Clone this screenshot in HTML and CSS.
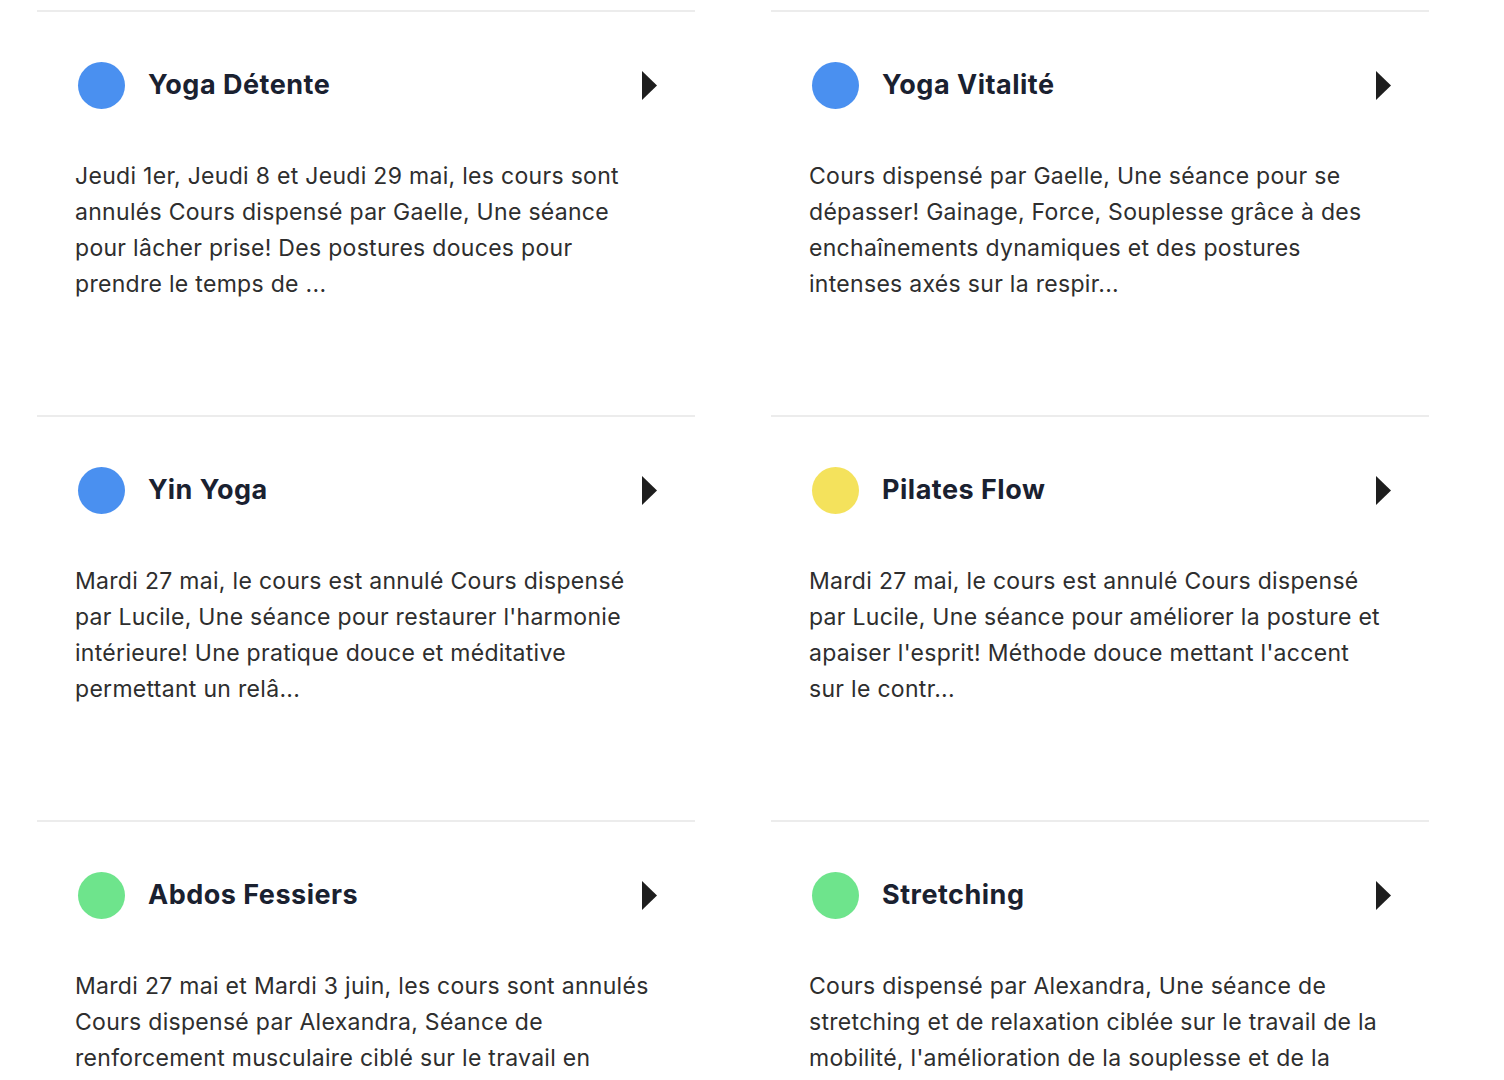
FILE: index.html
```html
<!DOCTYPE html>
<html lang="fr">
<head>
<meta charset="utf-8">
<title>Cours</title>
<link rel="stylesheet" href="styles.css">
</head>
<body>
<div class="grid">
  <div class="card">
    <div class="head">
      <span class="dot blue"></span>
      <h2 class="title">Yoga Détente</h2>
      <svg class="arrow" viewBox="0 0 15 29"><path d="M0 0 L15 14.5 L0 29 Z"/></svg>
    </div>
    <p class="desc">Jeudi 1er, Jeudi 8 et Jeudi 29 mai, les cours sont<br>annulés Cours dispensé par Gaelle, Une séance<br>pour lâcher prise! Des postures douces pour<br>prendre le temps de ...</p>
  </div>
  <div class="card">
    <div class="head">
      <span class="dot blue"></span>
      <h2 class="title">Yoga Vitalité</h2>
      <svg class="arrow" viewBox="0 0 15 29"><path d="M0 0 L15 14.5 L0 29 Z"/></svg>
    </div>
    <p class="desc">Cours dispensé par Gaelle, Une séance pour se<br>dépasser! Gainage, Force, Souplesse grâce à des<br>enchaînements dynamiques et des postures<br>intenses axés sur la respir...</p>
  </div>
  <div class="card">
    <div class="head">
      <span class="dot blue"></span>
      <h2 class="title">Yin Yoga</h2>
      <svg class="arrow" viewBox="0 0 15 29"><path d="M0 0 L15 14.5 L0 29 Z"/></svg>
    </div>
    <p class="desc">Mardi 27 mai, le cours est annulé Cours dispensé<br>par Lucile, Une séance pour restaurer l'harmonie<br>intérieure! Une pratique douce et méditative<br>permettant un relâ...</p>
  </div>
  <div class="card">
    <div class="head">
      <span class="dot yellow"></span>
      <h2 class="title">Pilates Flow</h2>
      <svg class="arrow" viewBox="0 0 15 29"><path d="M0 0 L15 14.5 L0 29 Z"/></svg>
    </div>
    <p class="desc">Mardi 27 mai, le cours est annulé Cours dispensé<br>par Lucile, Une séance pour améliorer la posture et<br>apaiser l'esprit! Méthode douce mettant l'accent<br>sur le contr...</p>
  </div>
  <div class="card">
    <div class="head">
      <span class="dot green"></span>
      <h2 class="title">Abdos Fessiers</h2>
      <svg class="arrow" viewBox="0 0 15 29"><path d="M0 0 L15 14.5 L0 29 Z"/></svg>
    </div>
    <p class="desc">Mardi 27 mai et Mardi 3 juin, les cours sont annulés<br>Cours dispensé par Alexandra, Séance de<br>renforcement musculaire ciblé sur le travail en<br>profondeur des ...</p>
  </div>
  <div class="card">
    <div class="head">
      <span class="dot green"></span>
      <h2 class="title">Stretching</h2>
      <svg class="arrow" viewBox="0 0 15 29"><path d="M0 0 L15 14.5 L0 29 Z"/></svg>
    </div>
    <p class="desc">Cours dispensé par Alexandra, Une séance de<br>stretching et de relaxation ciblée sur le travail de la<br>mobilité, l'amélioration de la souplesse et de la<br>posture...</p>
  </div>
</div>
</body>
</html>
```

FILE: styles.css
```css
html, body {
  margin: 0;
  padding: 0;
  background: #ffffff;
}
body {
  font-family: Inter, Lato, "Liberation Sans", sans-serif;
  color: #2b2b2b;
  overflow: hidden;
  height: 1080px;
}
.grid {
  display: grid;
  grid-template-columns: 658px 658px;
  column-gap: 76px;
  padding: 10px 0 0 37px;
}
.card {
  border-top: 2px solid #ececec;
  height: 403px;
  box-sizing: content-box;
}
.head {
  display: flex;
  align-items: center;
  height: 47px;
  margin-top: 50px;
  padding: 0 38px 0 41px;
}
.dot {
  width: 47px;
  height: 47px;
  border-radius: 50%;
  flex: none;
}
.blue { background: #4a90f0; }
.yellow { background: #f4e25c; }
.green { background: #6ee48c; }
.title {
  margin: -3px 0 0 23px;
  flex: 1;
  font-size: 27px;
  font-weight: 700;
  letter-spacing: 0.5px;
  color: #1a2130;
}
.arrow {
  width: 15px;
  height: 29px;
  fill: #1e1e1e;
  flex: none;
}
.desc {
  margin: 49px 0 0 38px;
  font-size: 23px;
  line-height: 36px;
  letter-spacing: 0.3px;
  white-space: nowrap;
  color: #2e2e2e;
}
```
